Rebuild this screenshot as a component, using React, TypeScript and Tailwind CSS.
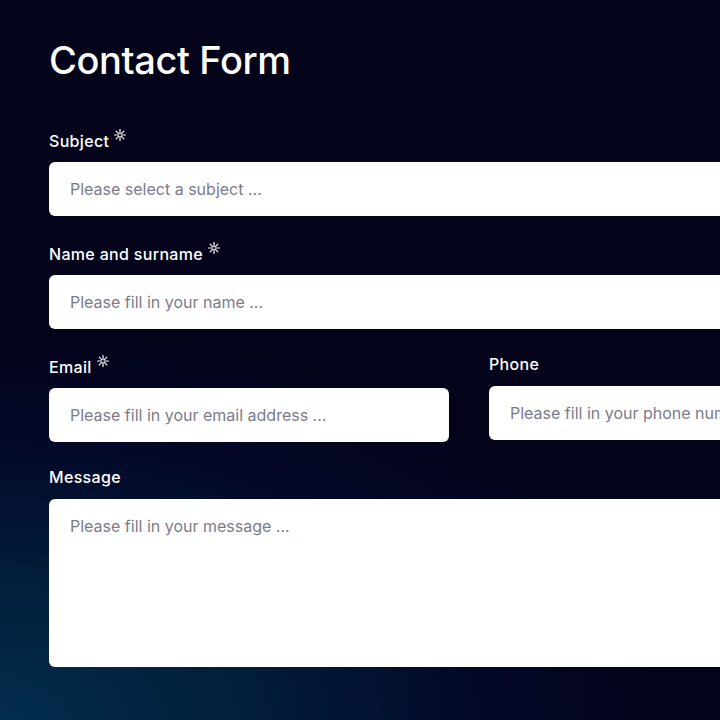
import React from "react";

const font = { fontFamily: "Inter, 'Noto Sans', sans-serif" };

function Star() {
  const arms = [0, 45, 90, 135, 180, 225, 270, 315];
  return (
    <svg width="12" height="12" viewBox="0 0 12 12" className="ml-[5px] self-start mt-[3px]" aria-hidden>
      {arms.map((a) => {
        const r = (a * Math.PI) / 180;
        const x1 = 6 + Math.cos(r) * 1.6;
        const y1 = 6 + Math.sin(r) * 1.6;
        const x2 = 6 + Math.cos(r) * 5.4;
        const y2 = 6 + Math.sin(r) * 5.4;
        return <line key={a} x1={x1} y1={y1} x2={x2} y2={y2} stroke="white" strokeWidth="1.2" strokeLinecap="round" />;
      })}
    </svg>
  );
}

function Label({ text, required }: { text: string; required?: boolean }) {
  return (
    <div className={`flex items-end text-white text-[16px] font-medium tracking-[0.02em] ${required ? "h-[27px] mb-[9px]" : "h-[24px] mb-[10px]"}`}>
      <span className="leading-6">{text}</span>
      {required && <Star />}
    </div>
  );
}

const inputCls =
  "w-full h-[54px] rounded-md bg-white px-[21px] text-[16px] leading-6 text-[#1a1a2a] placeholder:text-[#7b7b8b] outline-none";

export default function App() {
  return (
    <div
      className="w-full min-h-screen h-[720px] overflow-hidden bg-[#03031a] bg-[radial-gradient(ellipse_95%_55%_at_0%_100%,#022d4d_0%,#021c38_40%,#030828_70%,#03031a_100%)]"
      style={font}
    >
      <div className="w-[840px] ml-[49px] pt-[38px]">
        <h1 className="text-white text-[38px] leading-[1.2] font-medium tracking-[-0.01em] mb-[42px]">Contact Form</h1>
        <div className="flex flex-col gap-[23px]">
          <div>
            <Label text="Subject" required />
            <input className={inputCls} placeholder="Please select a subject ..." />
          </div>
          <div>
            <Label text="Name and surname" required />
            <input className={inputCls} placeholder="Please fill in your name ..." />
          </div>
          <div className="grid grid-cols-2 gap-x-10 items-start">
            <div>
              <Label text="Email" required />
              <input className={inputCls} placeholder="Please fill in your email address ..." />
            </div>
            <div>
              <Label text="Phone" />
              <input className={inputCls} placeholder="Please fill in your phone number ..." />
            </div>
          </div>
          <div>
            <Label text="Message" />
            <textarea
              className="w-full h-[168px] rounded-md bg-white px-[21px] py-[15px] text-[16px] leading-6 text-[#1a1a2a] placeholder:text-[#7b7b8b] outline-none resize-none block"
              placeholder="Please fill in your message ..."
            />
          </div>
        </div>
      </div>
    </div>
  );
}
